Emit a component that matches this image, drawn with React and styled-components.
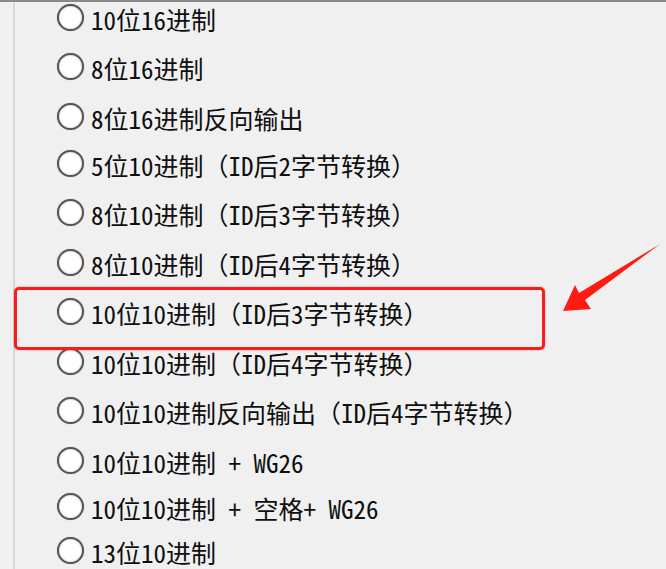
import React from "react";
import styled, { createGlobalStyle } from "styled-components";

const GlobalStyle = createGlobalStyle`
  html, body {
    margin: 0;
    padding: 0;
    background: #f0f0f0;
    overflow: hidden;
  }
`;

const Frame = styled.div`
  position: relative;
  width: 666px;
  height: 569px;
  box-sizing: border-box;
  border-top: 2px solid #8a8a8a;
  background: #f0f0f0;
  overflow: hidden;
`;

const Panel = styled.div`
  margin-left: 13px;
  height: 100%;
  border-left: 2px solid #d9d9d9;
  padding-left: 42px;
  box-sizing: border-box;
`;

const List = styled.div`
  display: flex;
  flex-direction: column;
  gap: 19.5px;

  & > :nth-child(4) {
    margin-top: -2.5px;
  }
  & > :nth-child(11) {
    margin-top: -3.5px;
  }
  & > :nth-child(12) {
    margin-top: -5px;
  }
`;

const Row = styled.label`
  display: flex;
  align-items: center;
  height: 30px;
  gap: 7px;
  font-family: "Noto Sans Mono CJK SC", "Noto Sans CJK SC", sans-serif;
  font-size: 25px;
  line-height: 26px;
  color: #0f0f0f;
  white-space: pre;
`;

const Label = styled.span`
  padding-top: 3px;
`;

const Radio = styled.span`
  flex: none;
  width: 27px;
  height: 27px;
  box-sizing: border-box;
  border-radius: 50%;
  border: 2px solid #555555;
  background: #ffffff;
  box-shadow: inset 0 0 0 1px #e6e6e6, 0 0 1px rgba(0, 0, 0, 0.35);
`;

const Highlight = styled.div`
  position: absolute;
  left: 14px;
  top: 285px;
  width: 531px;
  height: 63px;
  box-sizing: border-box;
  border: 3px solid #f81d1d;
  border-radius: 5px;
  box-shadow: 0 0 1.5px rgba(255, 30, 30, 0.7);
  pointer-events: none;
`;

const Arrow = styled.svg`
  position: absolute;
  left: 0;
  top: -2px;
  width: 666px;
  height: 569px;
  pointer-events: none;
  filter: blur(0.4px);
`;

const options = [
  "10位16进制",
  "8位16进制",
  "8位16进制反向输出",
  "5位10进制（ID后2字节转换）",
  "8位10进制（ID后3字节转换）",
  "8位10进制（ID后4字节转换）",
  "10位10进制（ID后3字节转换）",
  "10位10进制（ID后4字节转换）",
  "10位10进制反向输出（ID后4字节转换）",
  "10位10进制 + WG26",
  "10位10进制 + 空格+ WG26",
  "13位10进制",
];

export default function App() {
  return (
    <>
      <GlobalStyle />
      <Frame>
        <Panel>
          <List>
            {options.map((t) => (
              <Row key={t}>
                <Radio />
                <Label>{t}</Label>
              </Row>
            ))}
          </List>
        </Panel>
        <Highlight />
        <Arrow viewBox="0 0 666 569">
          <polygon
            points="563,311 575,285 579,293 660,244 585,300 591,309"
            fill="#ff1a14"
          />
        </Arrow>
      </Frame>
    </>
  );
}
